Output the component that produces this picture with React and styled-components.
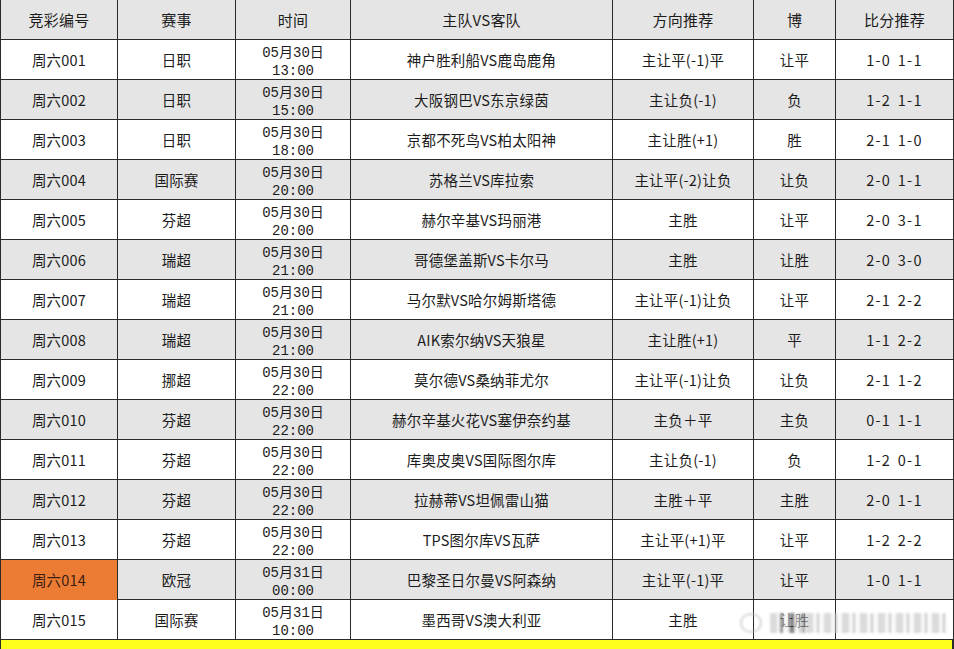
import React from 'react';
import styled, { createGlobalStyle } from 'styled-components';

const GlobalStyle = createGlobalStyle`
  html, body {
    margin: 0;
    padding: 0;
    background: #ffffff;
  }
  body {
    font-family: 'Noto Sans CJK SC', 'DejaVu Sans', sans-serif;
  }
`

const cols = '117px 118px 115px 262px 141px 82px 119px';

const Sheet = styled.div`
  position: relative;
  width: 954px;
  height: 649px;
  overflow: hidden;
  background: #ffffff;
`

const Row = styled.div`
  display: grid;
  grid-template-columns: ${cols};
  height: 40px;
  box-sizing: border-box;
  border-bottom: 1px solid #2a2a2a;
  background: ${p => (p.$shade ? '#e5e5e5' : '#ffffff')};
`

const Cell = styled.div`
  display: flex;
  flex-direction: column;
  align-items: center;
  justify-content: center;
  box-sizing: border-box;
  border-left: 1px solid #2a2a2a;
  border-right: ${p => (p.$last ? '1px solid #2a2a2a' : 'none')};
  background: ${p => p.$bg || 'transparent'};
  color: ${p => (p.$bg ? '#3b1d12' : '#1c1c1c')};
  font-size: 14.5px;
  line-height: 18px;
  white-space: nowrap;
  letter-spacing: 0.2px;
`

const HeadCell = styled(Cell)`
  font-size: 15px;
`

// time column uses a mono face for the digits, like the sheet's original font
const TimeCell = styled(Cell)`
  font-family: 'Liberation Mono', 'Noto Sans CJK SC', monospace;
  font-size: 14px;
  letter-spacing: 0;
  padding-top: 4px;
`

const ScoreCell = styled(Cell)`
  letter-spacing: 1.3px;
  word-spacing: 2px;
`

const Line = styled.span`
  display: block;
  line-height: 18px;
`

const YellowBar = styled.div`
  height: 9px;
  background: #ffff1e;
  border-left: 1px solid #2a2a2a;
  border-right: 2px solid #2a2a2a;
`

const Watermark = styled.div`
  position: absolute;
  left: 740px;
  top: 611px;
  width: 208px;
  height: 24px;
  display: flex;
  align-items: center;
  gap: 8px;
  opacity: 0.6;
  filter: blur(1.3px);
  pointer-events: none;
`

const Logo = styled.div`
  width: 22px;
  height: 20px;
  border-radius: 50%;
  border: 2px solid #bdbdbd;
  box-sizing: border-box;
  flex: none;
`

const Smear = styled.div`
  flex: 1;
  height: 20px;
  background:
    linear-gradient(90deg, transparent 0 10px, #555 10px 13px, transparent 13px 20px, #333 20px 24px, transparent 24px 32px, #777 32px 35px, transparent 35px 100%),
    repeating-linear-gradient(90deg, #c4c4c4 0 7px, #f2f2f2 7px 11px, #a8a8a8 11px 13px, #f6f6f6 13px 18px);
`

const headers = ['竞彩编号', '赛事', '时间', '主队VS客队', '方向推荐', '博', '比分推荐'];

const matches = [
  ['周六001', '日职', '05月30日', '13:00', '神户胜利船VS鹿岛鹿角', '主让平(-1)平', '让平', '1-0 1-1'],
  ['周六002', '日职', '05月30日', '15:00', '大阪钢巴VS东京绿茵', '主让负(-1)', '负', '1-2 1-1'],
  ['周六003', '日职', '05月30日', '18:00', '京都不死鸟VS柏太阳神', '主让胜(+1)', '胜', '2-1 1-0'],
  ['周六004', '国际赛', '05月30日', '20:00', '苏格兰VS库拉索', '主让平(-2)让负', '让负', '2-0 1-1'],
  ['周六005', '芬超', '05月30日', '20:00', '赫尔辛基VS玛丽港', '主胜', '让平', '2-0 3-1'],
  ['周六006', '瑞超', '05月30日', '21:00', '哥德堡盖斯VS卡尔马', '主胜', '让胜', '2-0 3-0'],
  ['周六007', '瑞超', '05月30日', '21:00', '马尔默VS哈尔姆斯塔德', '主让平(-1)让负', '让平', '2-1 2-2'],
  ['周六008', '瑞超', '05月30日', '21:00', 'AIK索尔纳VS天狼星', '主让胜(+1)', '平', '1-1 2-2'],
  ['周六009', '挪超', '05月30日', '22:00', '莫尔德VS桑纳菲尤尔', '主让平(-1)让负', '让负', '2-1 1-2'],
  ['周六010', '芬超', '05月30日', '22:00', '赫尔辛基火花VS塞伊奈约基', '主负＋平', '主负', '0-1 1-1'],
  ['周六011', '芬超', '05月30日', '22:00', '库奥皮奥VS国际图尔库', '主让负(-1)', '负', '1-2 0-1'],
  ['周六012', '芬超', '05月30日', '22:00', '拉赫蒂VS坦佩雷山猫', '主胜＋平', '主胜', '2-0 1-1'],
  ['周六013', '芬超', '05月30日', '22:00', 'TPS图尔库VS瓦萨', '主让平(+1)平', '让平', '1-2 2-2'],
  ['周六014', '欧冠', '05月31日', '00:00', '巴黎圣日尔曼VS阿森纳', '主让平(-1)平', '让平', '1-0 1-1', true],
  ['周六015', '国际赛', '05月31日', '10:00', '墨西哥VS澳大利亚', '主胜', '让胜', ''],
];

const MatchRow = ({ data, shade }) => {
  const [code, league, day, time, teams, pick, bo, score, hot] = data;
  return (
    <Row $shade={shade}>
      <Cell $bg={hot ? '#ec7c33' : undefined}>{code}</Cell>
      <Cell>{league}</Cell>
      <TimeCell>
        <Line>{day}</Line>
        <Line>{time}</Line>
      </TimeCell>
      <Cell>{teams}</Cell>
      <Cell>{pick}</Cell>
      <Cell>{bo}</Cell>
      <ScoreCell $last>{score}</ScoreCell>
    </Row>
  );
};

export default function App() {
  return (
    <Sheet>
      <GlobalStyle />
      <Row $shade>
        {headers.map((h, i) => (
          <HeadCell key={h} $last={i === headers.length - 1}>{h}</HeadCell>
        ))}
      </Row>
      {matches.map((m, i) => (
        <MatchRow key={m[0]} data={m} shade={i % 2 === 1} />
      ))}
      <YellowBar />
      <Watermark>
        <Logo />
        <Smear />
      </Watermark>
    </Sheet>
  );
}
